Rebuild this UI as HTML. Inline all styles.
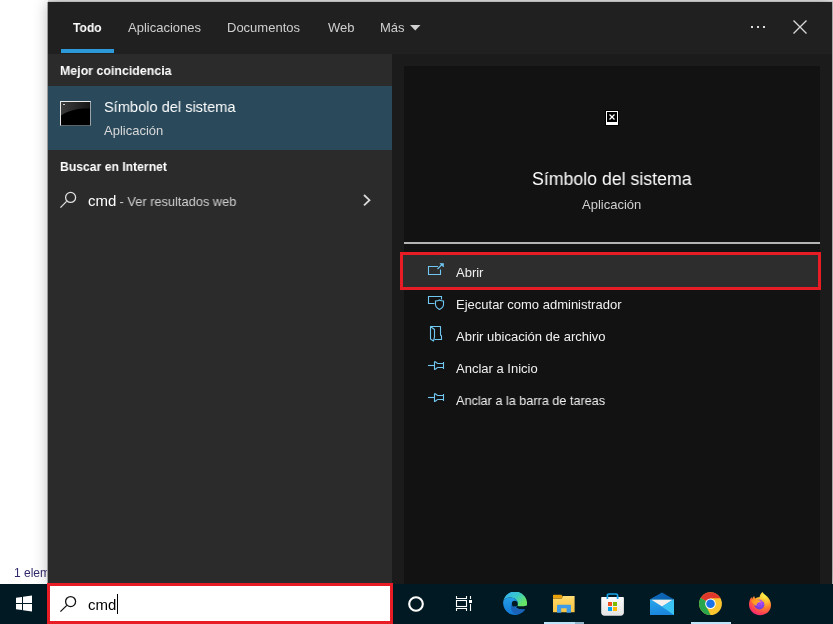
<!DOCTYPE html>
<html><head><meta charset="utf-8">
<style>
*{margin:0;padding:0;box-sizing:border-box}
html,body{width:833px;height:624px;overflow:hidden;background:#fff;font-family:"Liberation Sans",sans-serif;position:relative}
.a{position:absolute}
.t{position:absolute;white-space:pre;line-height:1;will-change:transform}
</style></head><body>
<!-- background explorer -->
<div class="t" style="left:14px;top:567px;font-size:12px;color:#30296a">1 elem</div>

<!-- panel -->
<div class="a" style="left:47px;top:2px;width:1px;height:581px;background:#b2b2b2"></div>
<div class="a" style="left:48px;top:0;width:785px;height:1px;background:#e6e6e6"></div>
<div class="a" style="left:48px;top:1px;width:785px;height:1px;background:#d4d4d4"></div>
<div class="a" style="left:832px;top:2px;width:1px;height:582px;background:#bcbcbc"></div>
<div class="a" style="left:48px;top:2px;width:784px;height:582px;background:#1b1b1b;box-shadow:0 0 14px rgba(0,0,0,0.28)"></div>
<div class="a" style="left:48px;top:2px;width:784px;height:52px;background:#202020"></div>
<div class="a" style="left:48px;top:54px;width:344px;height:530px;background:#2b2b2b"></div>
<div class="a" style="left:404px;top:66px;width:416px;height:518px;background:#121212"></div>

<!-- tabs -->
<div class="t" style="left:73px;top:21px;font-size:13px;font-weight:bold;color:#fff;transform:scaleX(0.93);transform-origin:0 0">Todo</div>
<div class="a" style="left:61px;top:49px;width:53px;height:4px;background:#2c9ad9"></div>
<div class="t" style="left:128px;top:21px;font-size:13px;color:#cfcfcf">Aplicaciones</div>
<div class="t" style="left:227px;top:21px;font-size:13px;color:#cfcfcf">Documentos</div>
<div class="t" style="left:328px;top:21px;font-size:13px;color:#cfcfcf">Web</div>
<div class="t" style="left:380px;top:21px;font-size:13px;color:#cfcfcf">Más</div>
<svg class="a" style="left:410px;top:25px" width="11" height="6"><path d="M0 0h10.5L5.25 5.5z" fill="#d0d0d0"/></svg>
<div class="a" style="left:751px;top:26px;width:2px;height:2px;background:#ddd"></div>
<div class="a" style="left:757px;top:26px;width:2px;height:2px;background:#ddd"></div>
<div class="a" style="left:763px;top:26px;width:2px;height:2px;background:#ddd"></div>
<svg class="a" style="left:790px;top:17px" width="20" height="20"><path d="M3.5 3.5L16.5 16.5M16.5 3.5L3.5 16.5" stroke="#d6d6d6" stroke-width="1.4"/></svg>

<!-- left list -->
<div class="t" style="left:60px;top:64px;font-size:13px;font-weight:bold;color:#fff;transform:scaleX(0.953);transform-origin:0 0">Mejor coincidencia</div>
<div class="a" style="left:48px;top:86px;width:344px;height:64px;background:#2a4a5c"></div>
<div class="a" style="left:60px;top:101px;width:31px;height:25px;background:#000;border-top:1px solid #ececec;border-left:1px solid #e6e6e6;border-right:1px solid #9aa4aa;border-bottom:1px solid #5a6468"></div>
<svg class="a" style="left:61px;top:102px" width="29" height="23"><defs><linearGradient id="cg" x1="0" y1="0" x2="1" y2="0"><stop offset="0" stop-color="#3c3c3c"/><stop offset="1" stop-color="#151515"/></linearGradient></defs><path d="M0 0H29V6.5C20 6.5 14 7 8 9.5C4 11 2 12 0 13.5Z" fill="url(#cg)"/><rect x="2" y="2" width="2" height="1" fill="#ccc"/></svg>
<div class="t" style="left:104px;top:99px;font-size:15.5px;color:#fff;transform:scaleX(0.942);transform-origin:0 0">Símbolo del sistema</div>
<div class="t" style="left:104px;top:124px;font-size:13px;color:#d8d8d8">Aplicación</div>

<div class="t" style="left:60px;top:160px;font-size:13px;font-weight:bold;color:#fff;transform:scaleX(0.937);transform-origin:0 0">Buscar en Internet</div>
<svg class="a" style="left:56px;top:188px" width="24" height="24"><circle cx="14.6" cy="9.4" r="5" fill="none" stroke="#e0e0e0" stroke-width="1.3"/><path d="M4.4 19.6L10.6 13.4" stroke="#e0e0e0" stroke-width="1.3"/></svg>
<div class="t" style="left:88px;top:193px;font-size:15px;color:#fff">cmd</div>
<div class="t" style="left:116px;top:195px;font-size:13px;color:#d0d0d0;transform:scaleX(0.985);transform-origin:0 0"> - Ver resultados web</div>
<svg class="a" style="left:356px;top:188px" width="20" height="24"><path d="M8 7L13.5 12.2L8 17.4" fill="none" stroke="#dadada" stroke-width="1.8"/></svg>

<!-- preview -->
<div class="a" style="left:605px;top:110px;width:14px;height:16px;background:#000"></div>
<div class="a" style="left:606px;top:111px;width:12px;height:14px;background:#fff"></div>
<div class="a" style="left:607px;top:112px;width:10px;height:10px;background:#000"></div>
<svg class="a" style="left:607px;top:112px" width="10" height="10"><path d="M2.5 2.5L7.5 7.5M7.5 2.5L2.5 7.5" stroke="#fff" stroke-width="1.2"/></svg>
<div class="t" style="left:532px;top:170px;font-size:18px;color:#fff;transform:scaleX(0.985);transform-origin:0 0">Símbolo del sistema</div>
<div class="t" style="left:582px;top:198px;font-size:13px;color:#cfcfcf">Aplicación</div>
<div class="a" style="left:404px;top:242px;width:416px;height:2px;background:#b4b4b4"></div>

<!-- actions -->
<div class="a" style="left:400px;top:252px;width:421px;height:38px;border:3px solid #e81c24;background:#2d2d2d"></div>
<div class="t" style="left:456px;top:266px;font-size:13px;color:#f0f0f0">Abrir</div>
<div class="t" style="left:456px;top:298px;font-size:13px;color:#f0f0f0">Ejecutar como administrador</div>
<div class="t" style="left:456px;top:330px;font-size:13px;color:#f0f0f0">Abrir ubicación de archivo</div>
<div class="t" style="left:456px;top:362px;font-size:13px;color:#f0f0f0">Anclar a Inicio</div>
<div class="t" style="left:456px;top:394px;font-size:13px;color:#f0f0f0;transform:scaleX(0.973);transform-origin:0 0">Anclar a la barra de tareas</div>


<!-- action icons -->
<svg class="a" style="left:424px;top:258px" width="24" height="22" fill="none" stroke="#70c8f2" stroke-width="1.1"><path d="M14 8.5H4.5V16.5H16.5V11.5"/><path d="M13.5 11L18.5 6"/><path d="M16 5.5H19.5V9Z" fill="#70c8f2" stroke-width="0.6"/></svg>
<svg class="a" style="left:424px;top:290px" width="24" height="22" fill="none" stroke="#70c8f2" stroke-width="1.1"><path d="M10.5 13.5H4.5V6.5H17.5V9.5"/><path d="M11.5 11C13 11 14.5 10.7 15.5 10C16.5 10.7 18 11 19.5 11V14.5C19.5 16.8 17.5 18.5 15.5 19.5C13.5 18.5 11.5 16.8 11.5 14.5Z"/></svg>
<svg class="a" style="left:424px;top:322px" width="24" height="22" fill="none" stroke="#70c8f2" stroke-width="1.1" stroke-linejoin="round"><path d="M6.5 4.5H16.5V13L17.5 14V17.5H10.5"/><path d="M6.5 4.5L10.5 7.5V15L9.5 19L6.5 17Z"/></svg>
<svg class="a" style="left:424px;top:356px" width="24" height="20" fill="none" stroke="#70c8f2" stroke-width="1.1"><path d="M4 9.5H10.5"/><path d="M10.5 5.5V13.5C12 13.5 12.5 11.5 14 11.5H19.5M10.5 5.5C12 5.5 12.5 7.5 14 7.5H19.5M19.5 6V13"/></svg>
<svg class="a" style="left:424px;top:388px" width="24" height="20" fill="none" stroke="#70c8f2" stroke-width="1.1"><path d="M4 9.5H10.5"/><path d="M10.5 5.5V13.5C12 13.5 12.5 11.5 14 11.5H19.5M10.5 5.5C12 5.5 12.5 7.5 14 7.5H19.5M19.5 6V13"/></svg>

<!-- taskbar -->
<div class="a" style="left:0;top:584px;width:833px;height:40px;background:#001923"></div>
<div class="a" style="left:47px;top:583px;width:346px;height:41px;background:#e81c24"></div>
<div class="a" style="left:50px;top:586px;width:340px;height:35px;background:#fff"></div>
<div class="t" style="left:88px;top:597px;font-size:15px;color:#000">cmd</div>
<div class="a" style="left:117px;top:594px;width:1px;height:20px;background:#000"></div>

<svg class="a" style="left:56px;top:592px" width="24" height="24"><circle cx="14.6" cy="9.6" r="5" fill="none" stroke="#111" stroke-width="1.3"/><path d="M4.4 19.6L10.8 13.4" stroke="#111" stroke-width="1.3"/></svg>
<svg class="a" style="left:14px;top:594px" width="20" height="20"><path d="M2 3.7L8 2.9V9H2Z M9 2.75L18 1.6V9H9Z M2 10H8V16.1L2 15.3Z M9 10H18V17.4L9 16.25Z" fill="#fff"/></svg>
<svg class="a" style="left:404px;top:592px" width="24" height="24"><circle cx="12" cy="12" r="6.8" fill="none" stroke="#fff" stroke-width="2.1"/></svg>
<svg class="a" style="left:452px;top:592px" width="24" height="22" fill="none" stroke="#fff" stroke-width="1.1"><path d="M4.5 4V6.5H14.5V4"/><rect x="4.5" y="8.5" width="10" height="6"/><path d="M4.5 19V16.5H14.5V19"/><path d="M18.5 4V7M18.5 12V19"/><rect x="17" y="8" width="3" height="3" fill="#fff" stroke="none"/></svg>
<!-- edge -->
<svg class="a" style="left:503px;top:592px" width="24" height="24" viewBox="0 0 24 24">
<defs>
<linearGradient id="eg1" x1="0.15" y1="0.1" x2="0.95" y2="0.6"><stop offset="0" stop-color="#35b4ee"/><stop offset="0.5" stop-color="#39c8c8"/><stop offset="1" stop-color="#66e566"/></linearGradient>
<linearGradient id="eg2" x1="0" y1="0" x2="0" y2="1"><stop offset="0" stop-color="#259ee8"/><stop offset="1" stop-color="#1077d4"/></linearGradient>
</defs>
<path d="M0.2 9.5C1 6.8 3.8 5.6 7 5.6C11 5.6 14.4 7.8 14.8 11L14.5 14C17 14.6 20.5 14.4 23.9 13.4A12 12 0 0 0 0.2 9.5Z" fill="url(#eg1)"/>
<path d="M0.2 9.5C1 6.8 3.8 5.6 7 5.6C11 5.6 14.4 7.8 14.8 11L13.2 16C15.5 17 19 17.5 22.1 17.6A12 12 0 0 1 0.2 9.5Z" fill="url(#eg2)"/>
<path d="M8.5 12.5C7.3 14.5 7.8 18.5 10.5 21C13.5 23.5 19 22 22.1 17.6C19 17.5 15.5 17 13.2 16C11.5 15.3 10.2 14 8.5 12.5Z" fill="#1b63b9"/>
<circle cx="11.7" cy="11.7" r="2.9" fill="#001923"/>
</svg>
<!-- folder -->
<svg class="a" style="left:552px;top:594px" width="24" height="20" viewBox="0 0 24 20">
<defs><linearGradient id="fdg" x1="0" y1="0" x2="0" y2="1"><stop offset="0" stop-color="#ffe07e"/><stop offset="0.25" stop-color="#ffd35d"/><stop offset="1" stop-color="#f8c545"/></linearGradient></defs>
<path d="M1 4.4H9.5L11.2 2H22.6V18.2H1Z" fill="url(#fdg)"/>
<path d="M1 1.6C1 1.1 1.3 0.8 1.8 0.8H9.2L11 2.5L9.4 4.4H1Z" fill="#e9a10b"/>
<path d="M5 18.8V11.6C5 11.1 5.3 10.8 5.8 10.8H18.2C18.7 10.8 19 11.1 19 11.6V18.8H14.6V14.2H9.2V18.8Z" fill="#3d9be8"/>
</svg>
<div class="a" style="left:544px;top:622px;width:31px;height:2px;background:#bde6fa"></div>
<div class="a" style="left:575px;top:622px;width:9px;height:2px;background:#8fb3c8"></div>
<!-- store -->
<svg class="a" style="left:600px;top:592px" width="25" height="25" viewBox="0 0 25 25">
<defs><linearGradient id="sg" x1="0" y1="0" x2="0" y2="1"><stop offset="0" stop-color="#fcfcfc"/><stop offset="1" stop-color="#e4e4e4"/></linearGradient></defs>
<path d="M1.2 6C1.2 5.4 1.6 5 2.2 5H22.8C23.4 5 23.9 5.4 23.9 6V20.5C23.9 22.4 22.6 23.7 20.7 23.7H4.4C2.5 23.7 1.2 22.4 1.2 20.5Z" fill="url(#sg)"/>
<path d="M7.4 7V3.6C7.4 2.6 8 2 9 2H16C17 2 17.6 2.6 17.6 3.6V7" fill="none" stroke="#1aa6ec" stroke-width="1.7"/>
<rect x="8" y="10" width="4" height="4" fill="#f25022"/><rect x="13" y="10" width="4" height="4" fill="#7fba00"/><rect x="8" y="15" width="4" height="4" fill="#00a4ef"/><rect x="13" y="15" width="4" height="4" fill="#ffb900"/>
</svg>
<!-- mail -->
<svg class="a" style="left:649px;top:592px" width="26" height="24" viewBox="0 0 26 24">
<defs><linearGradient id="mg1" x1="0" y1="0" x2="0.3" y2="1"><stop offset="0" stop-color="#2aa8ec"/><stop offset="1" stop-color="#1a86dc"/></linearGradient>
<linearGradient id="mg2" x1="0" y1="0" x2="1" y2="0"><stop offset="0" stop-color="#0d6cc0"/><stop offset="1" stop-color="#0a5aa8"/></linearGradient></defs>
<path d="M1 7.3L13 0.5L25 7.3Z" fill="url(#mg2)"/>
<path d="M1 7.3H25V23H1Z" fill="url(#mg1)"/>
<path d="M25 7.3V23L13 14.8Z" fill="#3ac3f3"/>
<path d="M2.5 7.8H23.5L13 14.5Z" fill="#f4f0ee"/>
</svg>
<!-- chrome -->
<svg class="a" style="left:699px;top:592px" width="24" height="24" viewBox="0 0 24 24">
<defs><clipPath id="cc"><circle cx="11.5" cy="11.7" r="11.4"/></clipPath></defs>
<g clip-path="url(#cc)">
<rect x="-1" y="-1" width="26" height="26" fill="#fbc52f"/>
<path d="M11.5 11.7L-1 4.5V-1H25V6.3H11.5Z" fill="#e0392c"/>
<path d="M-1 4.5L11.5 11.7L7.2 14.2L12.5 25H-1Z" fill="#28a64c"/>
</g>
<circle cx="11.5" cy="11.7" r="5.3" fill="#fff"/>
<circle cx="11.5" cy="11.7" r="4.3" fill="#1b72e6"/>
</svg>
<div class="a" style="left:691px;top:622px;width:40px;height:2px;background:#bde6fa"></div>
<!-- firefox -->
<svg class="a" style="left:747px;top:590px" width="26" height="27" viewBox="0 0 26 27">
<defs>
<radialGradient id="fg1" cx="0.72" cy="0.12" r="1.05"><stop offset="0" stop-color="#fff34a"/><stop offset="0.3" stop-color="#ffc232"/><stop offset="0.55" stop-color="#ff7a2c"/><stop offset="0.8" stop-color="#ff3a5a"/><stop offset="1" stop-color="#e8168e"/></radialGradient>
<radialGradient id="fg2" cx="0.6" cy="0.25" r="0.9"><stop offset="0" stop-color="#b94cf6"/><stop offset="1" stop-color="#5b3ad8"/></radialGradient>
<linearGradient id="fg3" x1="0" y1="0" x2="1" y2="0.5"><stop offset="0" stop-color="#ff8a1c"/><stop offset="1" stop-color="#ffb52a"/></linearGradient>
</defs>
<path d="M15.5 2C17 4.5 19.5 5.5 21.5 8C23.2 10.2 24 12.5 24 15C24 21 19 25.2 13 25.2C7 25.2 2 20.5 2 14.5C2 11.5 3 9 4.5 7L5 9C5.5 8 6.5 6.5 7.2 6L8 8.5C9.5 7.5 11.5 7 12.5 7.2C12.8 5 14 3.2 15.5 2Z" fill="url(#fg1)"/>
<circle cx="12.4" cy="14.5" r="5" fill="url(#fg2)"/>
<path d="M4 10.5C6 9.2 9 9 11 9.8C12.5 10.3 13.5 11 14.2 11.8C12.5 11.8 11 12.5 10 13.5C9.5 14.3 9.3 15 9.5 16C7.5 15 5.2 13 4 10.5Z" fill="url(#fg3)"/>
<path d="M13 9.5C15.5 8.8 18.5 9.8 19.5 12.5C18.5 11.5 17 11.3 16 11.8C15.2 10.8 14.2 10 13 9.5Z" fill="#ffb52a" opacity="0.9"/>
</svg>
</body></html>
